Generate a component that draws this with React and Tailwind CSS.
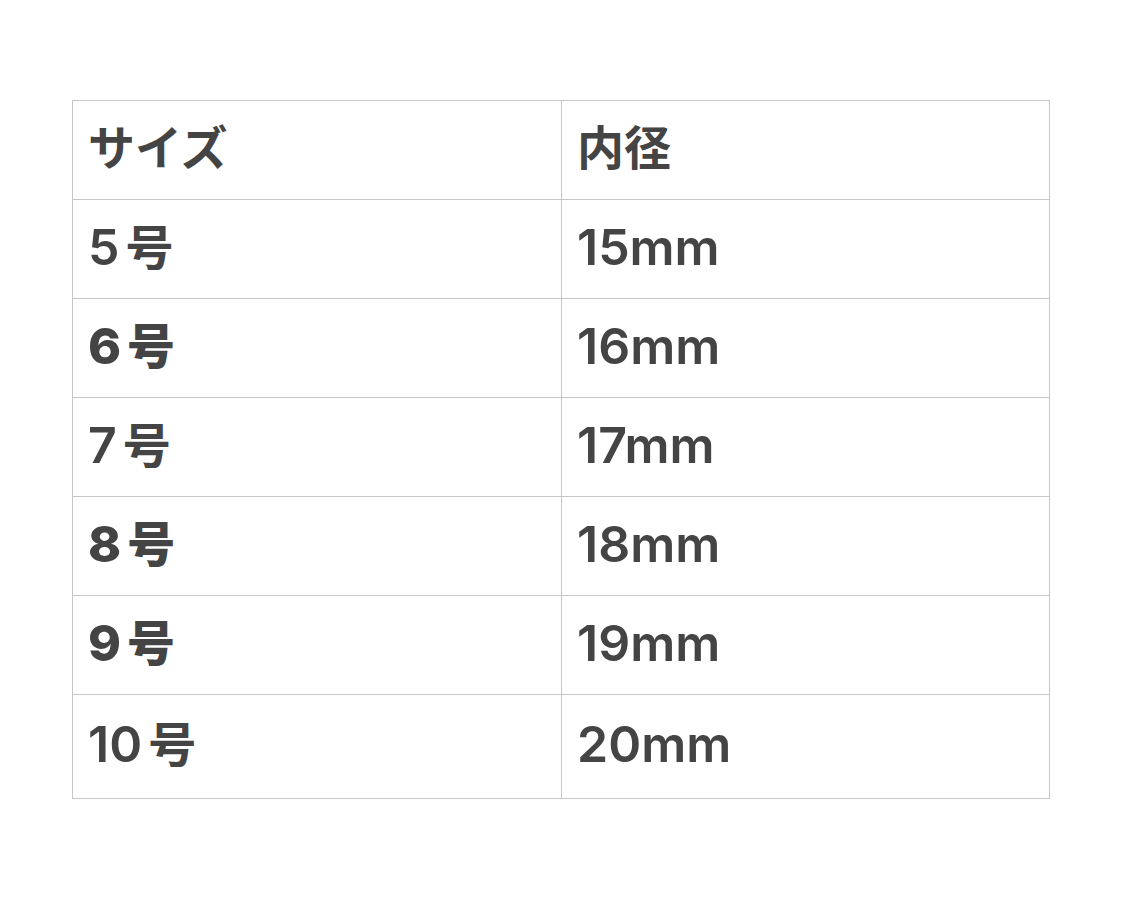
const rows = [
  { num: "5", inner: "15mm", bold: false },
  { num: "6", inner: "16mm", bold: true },
  { num: "7", inner: "17mm", bold: false },
  { num: "8", inner: "18mm", bold: true },
  { num: "9", inner: "19mm", bold: true },
  { num: "10", inner: "20mm", bold: false },
];

export default function App() {
  return (
    <div
      className="min-h-[900px] bg-white pt-[100px] pl-[72px] text-[#444444]"
      style={{ fontFamily: "Inter, 'Noto Sans CJK JP', sans-serif" }}
    >
      <table className="w-[978px] border-collapse text-[50px] leading-none">
        <thead>
          <tr className="h-[99px] text-[47px]">
            <th className="w-[489px] border border-[#c6c6c6] pl-[15px] pb-[6px] text-left font-bold">
              サイズ
            </th>
            <th className="border border-[#c6c6c6] pl-[15px] pb-[6px] text-left font-bold">
              内径
            </th>
          </tr>
        </thead>
        <tbody>
          {rows.map((r, i) => (
            <tr
              key={r.num}
              className={i === rows.length - 1 ? "h-[104px]" : "h-[99px]"}
            >
              <td
                className={
                  "border border-[#c6c6c6] pl-[15px] pb-[5px] " +
                  (r.bold ? "font-extrabold" : "font-semibold")
                }
              >
                {r.num}
                <span className="ml-[6px] text-[48px]">号</span>
              </td>
              <td className="border border-[#c6c6c6] pl-[15px] pb-[5px] font-semibold">
                {r.inner}
              </td>
            </tr>
          ))}
        </tbody>
      </table>
    </div>
  );
}
